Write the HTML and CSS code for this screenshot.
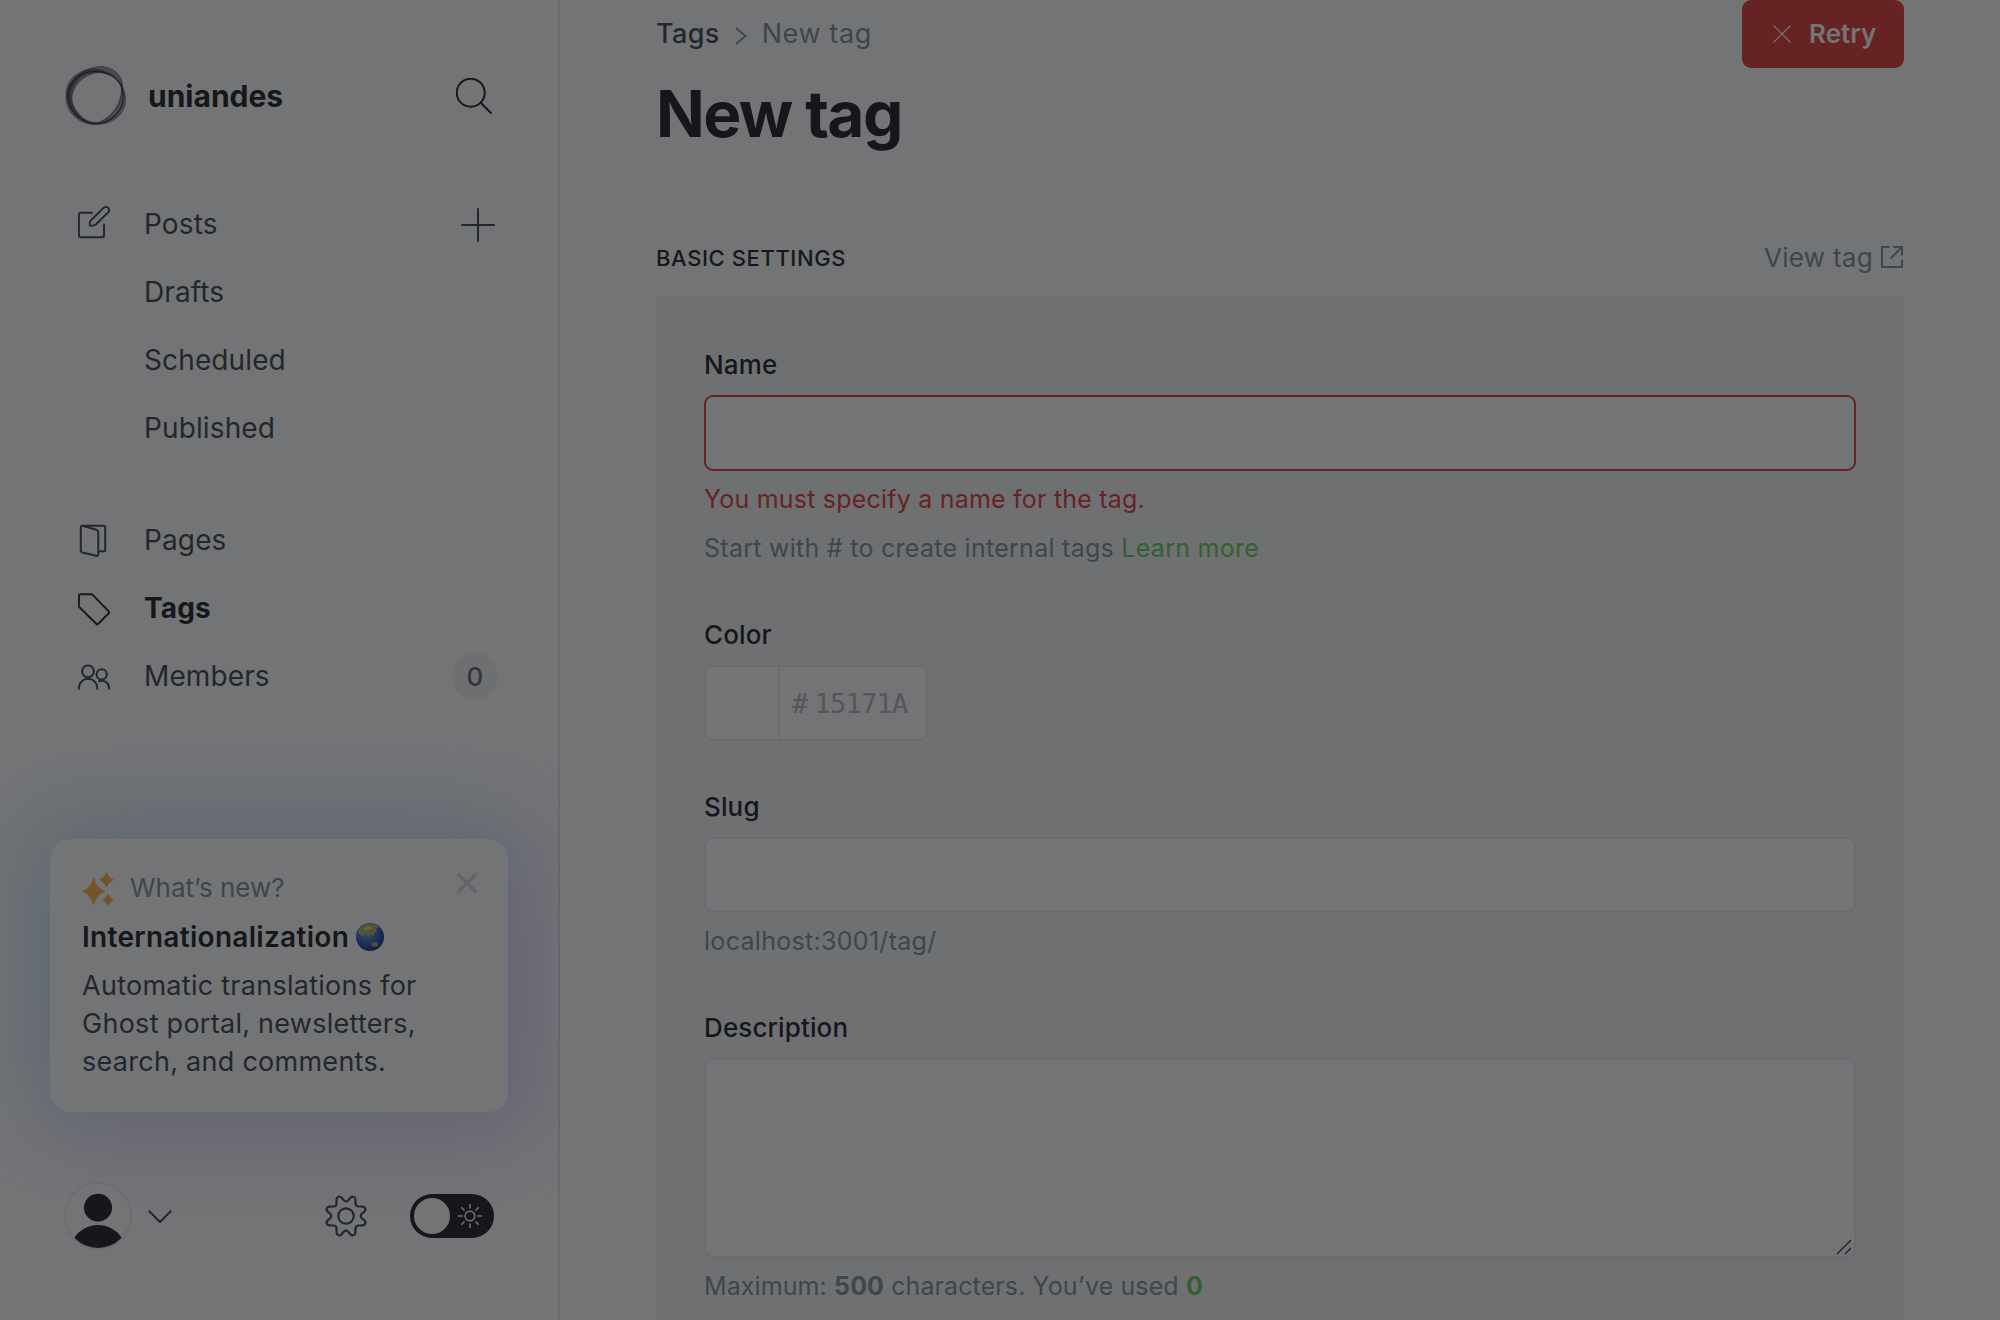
FILE: index.html
```html
<!DOCTYPE html>
<html lang="en">
<head>
<meta charset="utf-8">
<title>New tag</title>
<link rel="stylesheet" href="styles.css">
</head>
<body>
<div class="app">
  <aside class="sidebar">
    <header class="site">
      <svg class="logo" viewBox="0 0 62 62" width="62" height="62">
        <g fill="#15171a" fill-rule="evenodd">
          <path opacity=".45" d="M15 8C24 2 35 4 43 7.500 52 11 61 20 61.500 34 62 47 52 58 34 59.500 16 61 2 48 2 32 1.500 20 7 12 15 8ZM18 12C26 6 38 7 46 10 55 14 58 22 58 30 57 43 47 57 31 58 18 57 7 44 7 31 8 22 12 16 18 12Z"/>
          <path opacity=".45" d="M16 9C22 4 32 1 38 1.500 48 2 58 9 58.500 20 59 32 56 43 46 52 34 61 24 59 14 52 5 44 2 33 4 25 6 18 10 13 16 9ZM20 13C26 8 36 6 45 9 53 12 58 16 57.500 25 57 38 50 50 36 57 22 60 12 48 8.500 38 6 28 12 18 20 13Z"/>
        </g>
        <g fill="none" stroke="#15171a" stroke-width=".9" opacity=".8">
          <path d="M15 8C24 2 35 4 43 7.500 52 11 61 20 61.500 34 62 47 52 58 34 59.500 16 61 2 48 2 32 1.500 20 7 12 15 8Z" opacity=".6"/>
          <path d="M16 9C22 4 32 1 38 1.500 48 2 58 9 58.500 20 59 32 56 43 46 52 34 61 24 59 14 52 5 44 2 33 4 25 6 18 10 13 16 9Z" opacity=".6"/>
          <path d="M17 10C27 5 37 6 45 9.500 54 14 59 22 59.500 31 59 46 48 58 32 59 17 58 5 46 4 33 4 22 9 14 17 10Z" stroke-width="1.200"/>
          <path d="M20 13C26 8 36 6 45 9 53 12 58 16 57.500 25 57 38 50 50 36 57 22 60 12 48 8.500 38 6 28 12 18 20 13Z" opacity=".7"/>
        </g>
      </svg>
      <span class="site-name">uniandes</span>
      <svg class="line search" viewBox="0 0 36 36" width="36" height="36" stroke-width="2"><circle cx="14.700" cy="14.700" r="14"/><path d="M24.700 24.700 35 35"/></svg>
    </header>

    <nav class="nav">
      <a class="item">
        <svg class="line" viewBox="0 0 32 36" width="32" height="36"><path d="M14 6.800H2.800Q.9 6.800 .9 8.700V29.300Q.9 31.200 2.800 31.200H24Q26 31.200 26 29.300V18.500M12 19.500Q10.800 16.500 13.500 13.800L25.600 1.900A3.200 3.200 0 0 1 30.200 6.400L17.800 18.500Q15.500 20.300 12 19.500Z"/></svg>
        <span>Posts</span>
        <svg class="line plus" viewBox="0 0 34 34" width="34" height="34"><path d="M17 1V33M1 17H33"/></svg>
      </a>
      <a class="item sub"><span>Drafts</span></a>
      <a class="item sub"><span>Scheduled</span></a>
      <a class="item sub"><span>Published</span></a>
    </nav>
    <nav class="nav second">
      <a class="item">
        <svg class="line" viewBox="0 0 32 36" width="32" height="36"><path d="M4.500 3.700 18.300 7.700Q20.300 8.200 20.300 10V32Q20.300 34.300 18.300 33.800L4.200 30.500Q2.800 30.100 2.800 28.500V5.300Q2.800 3.700 4.400 3.700H25.500Q27.200 3.700 27.200 5.300V27.700Q27.200 29.300 25.500 29.300H20.500"/></svg>
        <span>Pages</span>
      </a>
      <a class="item active">
        <svg class="line" viewBox="0 0 32 36" width="32" height="36"><path d="M2.500 4.200H13Q14 4.200 14.700 4.900L31 21.600Q31.600 22.300 31 23L19.900 34.100Q19.200 34.700 18.500 34L1.600 17.400Q.9 16.700 .9 15.700V5.800Q.9 4.200 2.500 4.200Z"/></svg>
        <span>Tags</span>
      </a>
      <a class="item">
        <svg class="line" viewBox="0 0 32 36" width="32" height="36"><circle cx="10" cy="13.300" r="5.900"/><circle cx="23.700" cy="16.400" r="5.100"/><path d="M.9 30.700V30A9.200 9.200 0 0 1 19.300 30V30.700M21 23.200C26.500 21.300 31.200 25 31.200 30.700"/></svg>
        <span>Members</span>
        <span class="badge">0</span>
      </a>
    </nav>

    <section class="news">
      <div class="news-head">
        <svg viewBox="0 0 32 34" width="32" height="34" fill="#fdb23a" stroke="#fdb23a" stroke-width=".8" stroke-linejoin="round"><path d="M11.500 6C14 13.500 16.500 17 23 19.500 16.500 22 14 25.500 11.500 33 9 25.500 6.500 22 .4 19.500 6.500 17 9 13.500 11.500 6ZM24.500 .5C26.300 4.500 27.800 6.300 31.500 7.800 27.800 9.300 26.300 11 24.500 15 22.700 11 21.200 9.300 17.500 7.800 21.200 6.300 22.700 4.500 24.500 .5ZM26 22C27.500 25.200 28.800 26.700 31.600 28 28.800 29.300 27.500 30.600 26 33.600 24.500 30.600 23.200 29.300 20.800 28 23.200 26.700 24.500 25.200 26 22Z"/></svg>
        <span>What’s new?</span>
        <svg class="dismiss" viewBox="0 0 20 20" width="20" height="20"><path d="M1.500 1.500 18.500 18.500M18.500 1.500 1.500 18.500"/></svg>
      </div>
      <div class="news-title"><span>Internationalization</span>
        <svg viewBox="0 0 28 28" width="28" height="28">
          <defs><radialGradient id="sea" cx=".4" cy=".35" r=".65"><stop offset="0" stop-color="#5a94e0"/><stop offset=".7" stop-color="#2450b8"/><stop offset="1" stop-color="#122a72"/></radialGradient></defs>
          <circle cx="14" cy="14" r="14" fill="url(#sea)"/>
          <path fill="#a9b45a" d="M2 8Q6 1 14 .6 20 1 23 4L20 6 21 9 18 10 17 13 15 11 13 15 11 11 8 12 7 15 5 12 2 11Z"/>
          <path fill="#b39a45" d="M16 20 19 19 22 20 22 23 18 24 15 22Z"/>
          <path fill="#d6cf8d" d="M9 4 14 3 17 5 13 7 8 7Z"/>
        </svg>
      </div>
      <p class="news-body">Automatic translations for<br>Ghost portal, newsletters,<br>search, and comments.</p>
    </section>

    <footer class="foot">
      <svg class="avatar" viewBox="0 0 68 68" width="68" height="68">
        <defs><clipPath id="face"><circle cx="34" cy="34" r="32"/></clipPath></defs>
        <circle cx="34" cy="34" r="33" fill="#fff" stroke="#ebeef0" stroke-width="2"/>
        <g fill="#15171a" clip-path="url(#face)"><circle cx="34" cy="25.700" r="14"/><ellipse cx="34" cy="69" rx="27.500" ry="26"/></g>
      </svg>
      <svg class="line chevron" viewBox="0 0 24 14" width="24" height="14"><path d="M1.300 1.300 12 12 22.700 1.300"/></svg>
      <svg class="line gear" viewBox="-21 -21 42 42" width="42" height="42">
        <circle r="7.700"/>
        <path d="M0-14.700Q1.200-14.700 2-15.600L4.300-18.300C6-20.400 9.300-19.300 9.400-16.800L9.500-12.500Q9.600-9.600 12.500-9.500L16.800-9.400C19.300-9.300 20.400-6 18.300-4.300L15.600-2Q14.700-1.200 14.700 0T15.600 2L18.300 4.300C20.400 6 19.300 9.300 16.800 9.400L12.500 9.500Q9.600 9.600 9.500 12.500L9.400 16.800C9.300 19.300 6 20.400 4.300 18.300L2 15.600Q1.200 14.700 0 14.700T-2 15.600L-4.300 18.300C-6 20.400-9.300 19.300-9.400 16.800L-9.500 12.500Q-9.600 9.600-12.500 9.500L-16.800 9.400C-19.300 9.300-20.400 6-18.300 4.300L-15.600 2Q-14.700 1.200-14.700 0T-15.600-2L-18.300-4.300C-20.400-6-19.300-9.300-16.800-9.400L-12.500-9.500Q-9.600-9.600-9.500-12.500L-9.400-16.800C-9.300-19.300-6-20.400-4.300-18.300L-2-15.600Q-1.200-14.700 0-14.700Z"/>
      </svg>
      <span class="toggle">
        <span class="knob"></span>
        <svg viewBox="-12 -12 24 24" width="24" height="24" fill="none" stroke="#fff" stroke-width="1.500"><circle r="4.800"/><path d="M0-12V-7.500M0 12V7.500M-12 0H-7.500M12 0H7.500M-8.800-8.800-5.500-5.500M8.800 8.800 5.500 5.500M-8.800 8.800-5.500 5.500M8.800-8.800 5.500-5.500"/></svg>
      </span>
    </footer>
  </aside>

  <main class="main">
    <header class="page-head">
      <div>
        <div class="crumbs">
          <a class="crumb">Tags</a>
          <svg viewBox="0 0 12 18" width="12" height="18"><path d="M1 1 10.500 9 1 17"/></svg>
          <span class="current">New tag</span>
        </div>
        <h1>New tag</h1>
      </div>
      <button class="retry">
        <svg viewBox="0 0 18 18" width="18" height="18"><path d="M.5 .5 17.500 17.500M17.500 .5 .5 17.500"/></svg>
        <span>Retry</span>
      </button>
    </header>

    <div class="section-head">
      <h4>Basic settings</h4>
      <a class="view">View tag
        <svg viewBox="0 0 22 22" width="22" height="22"><path d="M8.500 1H1V21H21V13.500M12.500 1H21V9.500M21 1 9.500 12.500"/></svg>
      </a>
    </div>

    <section class="panel">
      <div class="field">
        <label>Name</label>
        <div class="input error"></div>
        <p class="help bad">You must specify a name for the tag.</p>
        <p class="help next">Start with # to create internal tags <a>Learn more</a></p>
      </div>
      <div class="field roomy">
        <label>Color</label>
        <div class="input color">
          <span class="swatch"></span>
          <span class="hex"><span class="hash">#</span><span>15171A</span></span>
        </div>
      </div>
      <div class="field">
        <label>Slug</label>
        <div class="input"></div>
        <p class="help slug">localhost:3001/tag/</p>
      </div>
      <div class="field roomy">
        <label>Description</label>
        <div class="input area">
          <svg class="grip" viewBox="0 0 16 16" width="16" height="16"><path d="M1 15 15 1M9 15 15 9"/></svg>
        </div>
        <p class="help count">Maximum: <b>500</b> characters. You’ve used <b class="ok">0</b></p>
      </div>
    </section>
  </main>
</div>
<div class="backdrop"></div>
</body>
</html>
```
FILE: styles.css
```css
* {
  box-sizing: border-box;
}

body {
  margin: 0;
  background: #fff;
  color: #15171a;
  font-family: Inter, "Liberation Sans", sans-serif;
  font-size: 28px;
}

h1, h4, p {
  margin: 0;
  font-weight: inherit;
}

svg {
  display: block;
  flex: none;
}

.app {
  display: flex;
  height: 1320px;
  overflow: hidden;
}

.line {
  fill: none;
  stroke: currentColor;
  stroke-width: 2;
  stroke-linecap: round;
  stroke-linejoin: round;
}

/* Sidebar */

.sidebar {
  flex: none;
  width: 560px;
  padding-top: 65px;
  border-right: 2px solid #e5e8ea;
}

.site {
  display: flex;
  align-items: center;
  height: 62px;
  padding: 0 66px 0 64px;
}

.site-name {
  margin-left: 22px;
  font-size: 30px;
  font-weight: 700;
}

.search {
  margin-left: auto;
}

.nav {
  margin-top: 63px;
  padding: 0 60px 0 78px;
  color: #394047;
  letter-spacing: .12px;
}

.nav.second {
  margin-top: 44px;
}

.item {
  display: flex;
  align-items: center;
  gap: 34px;
  height: 68px;
}

.item.sub {
  padding-left: 66px;
}

.item.active {
  color: #15171a;
  font-weight: 700;
}

.plus {
  margin: 2px 3px 0 auto;
}

.badge {
  width: 46px;
  height: 47px;
  margin-left: auto;
  border-radius: 50%;
  background: #f0f2f3;
  color: #58626c;
  font-size: 26px;
  font-weight: 500;
  line-height: 47px;
  text-align: center;
}

.news {
  width: 458px;
  height: 273px;
  margin: 129px 0 0 50px;
  padding: 33px 31px 0 32px;
  border-radius: 20px;
  background: #fff;
  box-shadow: -14px -12px 84px 16px rgba(95, 215, 220, .24), 14px 12px 84px 16px rgba(190, 115, 245, .27);
}

.news-head {
  display: flex;
  align-items: center;
  height: 34px;
  color: #7c8b9a;
  font-size: 26px;
}

.news-head span {
  margin: -3px 0 0 16px;
}

.dismiss {
  margin: -13px 0 0 auto;
  fill: none;
  stroke: #d8dadc;
  stroke-width: 3.4;
  stroke-linecap: round;
}

.news-title {
  display: flex;
  align-items: center;
  gap: 7px;
  height: 36px;
  margin-top: 13px;
  font-weight: 600;
  letter-spacing: .3px;
}

.news-body {
  margin-top: 12px;
  color: #394047;
  font-size: 27px;
  letter-spacing: .27px;
  line-height: 38px;
}

.foot {
  display: flex;
  align-items: center;
  height: 68px;
  margin-top: 70px;
  padding: 0 64px;
  color: #394047;
}

.chevron {
  margin: 2px 0 0 16px;
}

.gear {
  margin-left: auto;
  stroke-width: 2.2;
}

.toggle {
  display: flex;
  align-items: center;
  justify-content: space-between;
  width: 84px;
  height: 44px;
  margin-left: 43px;
  padding: 0 12px 0 4px;
  border-radius: 22px;
  background: #15171a;
}

.knob {
  width: 36px;
  height: 36px;
  border-radius: 50%;
  background: #fff;
}

/* Main column */

.main {
  flex: 1;
  padding: 0 96px;
  background: #fff;
}

.page-head {
  display: flex;
  justify-content: space-between;
  align-items: flex-start;
}

.crumbs {
  display: flex;
  align-items: center;
  height: 67px;
  color: #7c8b9a;
  font-size: 27px;
  letter-spacing: .35px;
}

.crumbs svg {
  margin: 4px 15px 0;
  fill: none;
  stroke: currentColor;
  stroke-width: 1.8;
}

.crumb {
  color: #394047;
  font-weight: 500;
}

.current {
  letter-spacing: .6px;
}

h1 {
  margin-top: 7px;
  font-size: 64px;
  font-weight: 700;
  letter-spacing: -1.6px;
  line-height: 80px;
}

.retry {
  display: flex;
  align-items: center;
  width: 162px;
  height: 68px;
  padding: 0 0 1px 31px;
  gap: 18px;
  border: 0;
  border-radius: 9px;
  background: #e13431;
  color: #fff;
  font: 600 26px Inter, sans-serif;
}

.retry svg {
  stroke: #fff;
  stroke-width: 1.2;
}

.section-head {
  display: flex;
  justify-content: space-between;
  align-items: center;
  height: 40px;
  margin: 84px 0 18px;
}

h4 {
  font-size: 22px;
  font-weight: 500;
  letter-spacing: .6px;
  text-transform: uppercase;
}

.view {
  display: flex;
  align-items: center;
  gap: 8px;
  padding: 0 1px 2px 0;
  color: #7c8b9a;
  font-size: 26px;
  letter-spacing: .3px;
}

.view svg {
  fill: none;
  stroke: currentColor;
  stroke-width: 2;
}

.panel {
  height: 1100px;
  padding: 53px 48px 0;
  border-radius: 6px;
  background: #f4f5f6;
}

.field {
  margin-bottom: 55px;
}

.field.roomy {
  margin-bottom: 50px;
}

label {
  display: block;
  height: 32px;
  margin-bottom: 14px;
  font-size: 26px;
  font-weight: 500;
  letter-spacing: .13px;
  line-height: 32px;
}

.input {
  height: 76px;
  border: 2px solid #e9ebee;
  border-radius: 9px;
  background: #fff;
}

.input.error {
  border-color: #e13431;
}

.input.color {
  display: flex;
  width: 224px;
}

.swatch {
  width: 74px;
  border-right: 2px solid #e9ebee;
}

.hex {
  display: flex;
  align-items: center;
  padding-left: 12px;
  color: #b3b4b9;
  font-family: "DejaVu Sans Mono", monospace;
  font-size: 27px;
  letter-spacing: -.75px;
}

.hash {
  margin-right: 7px;
}

.input.area {
  position: relative;
  height: 200px;
}

.grip {
  position: absolute;
  right: 2px;
  bottom: 1px;
  stroke: #4b4b4b;
  stroke-width: 1.6;
}

.help {
  margin-top: 12px;
  color: #7c8b9a;
  font-size: 25px;
  letter-spacing: .27px;
  line-height: 32px;
}

.help.next {
  margin-top: 17px;
}

.help.bad {
  color: #e13431;
  letter-spacing: .21px;
}

.help.slug {
  letter-spacing: .3px;
}

.help.count {
  letter-spacing: .1px;
}

.help a, .help .ok {
  color: #5fcd50;
}

.backdrop {
  position: fixed;
  inset: 0;
  background: rgba(21, 23, 26, .6);
}
```
